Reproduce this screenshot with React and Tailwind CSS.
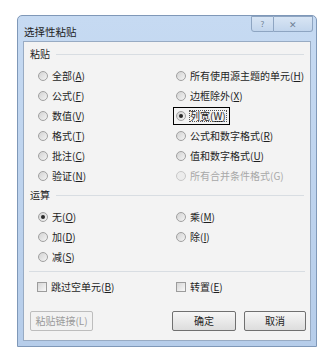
import React from 'react';

const font = { fontFamily: '"Noto Sans CJK SC", "Microsoft YaHei", sans-serif' };

const Radio = ({ checked, disabled }) => (
    <span className={`w-[10px] h-[10px] rounded-full border flex items-center justify-center shrink-0 ${disabled ? 'border-[#c8c8c8] bg-[#ececec]' : 'border-[#a0a0a0] bg-gradient-to-br from-[#d2d2d2] to-[#f4f4f4]'}`}>
        {checked && <span className="w-[4px] h-[4px] rounded-full bg-[#2a2a2a]"></span>}
    </span>
);

const Check = () => (
    <span className="w-[10px] h-[10px] border border-[#9c9c9c] bg-gradient-to-br from-[#d6d6d6] to-[#f8f8f8] shrink-0"></span>
);

const Label = ({ text, k, disabled }) => (
    <span className={disabled ? 'text-[#a8a8a8]' : 'text-[#1e1e1e]'}>
        {text}({disabled ? k : <u>{k}</u>})
    </span>
);

const Option = ({ text, k, checked, disabled, focus }) => (
    <div className="h-[20px] flex items-center">
        {focus ? (
            <div className="flex items-center gap-[4px] border border-black h-[18px] -ml-[3px] pl-[2px] pr-[3px]">
                <Radio checked={checked} />
                <span className="outline outline-1 outline-dotted outline-[#555]">
                    <Label text={text} k={k} />
                </span>
            </div>
        ) : (
            <div className="flex items-center gap-[4px]">
                <Radio checked={checked} disabled={disabled} />
                <Label text={text} k={k} disabled={disabled} />
            </div>
        )}
    </div>
);

const SectionHead = ({ title }) => (
    <div className="h-[18px] flex items-center pl-[6px] pr-[6px] gap-[6px]">
        <span className="text-[#1e1e1e]">{title}</span>
        <span className="flex-1 border-t border-[#d8dde2]"></span>
    </div>
);

const Button = ({ children, disabled, width }) => (
    <div className={`${width} h-[20px] flex items-center justify-center rounded-[2px] border ${disabled ? 'border-[#bdbdbd] bg-[#f2f2f2] text-[#9a9a9a]' : 'border-[#707070] bg-gradient-to-b from-[#f6f6f6] to-[#dddddd] text-[#1e1e1e]'}`}>
        {children}
    </div>
);

export default function App() {
    return (
        <div className="w-[331px] h-[358px] bg-white pt-[15px] pl-[17px]" style={font}>
            <div className="w-[300px] h-[332px] rounded-t-[5px] border border-[#7f98b8] bg-gradient-to-b from-[#c6daf2] to-[#b6cdea] flex flex-col px-[5px] pb-[5px] text-[10px] leading-none">
                {/* Title bar */}
                <div className="h-[25px] flex items-start justify-between">
                    <span className="mt-[11px] ml-[1px] text-[#1e1e1e] text-[10.5px]">选择性粘贴</span>
                    <div className="flex h-[16px] -mr-[2px]">
                        <div className="w-[23px] h-full border border-[#8ea5c2] rounded-bl-[3px] bg-gradient-to-b from-[#d8e5f4] to-[#c2d5ec] flex items-center justify-center text-[8px] text-[#6f7f94]">?</div>
                        <div className="w-[39px] h-full border border-l-0 border-[#8ea5c2] rounded-br-[3px] bg-gradient-to-b from-[#d8e5f4] to-[#c2d5ec] flex items-center justify-center text-[9px] text-[#6f7f94]">✕</div>
                    </div>
                </div>

                {/* Content */}
                <div className="flex-1 border border-[#98abc3] bg-[#f3f3f3] flex flex-col pt-[3px]">
                    <SectionHead title="粘贴" />
                    <div className="mt-[3px] grid grid-cols-[138px_1fr] pl-[14px]">
                        <div className="flex flex-col">
                            <Option text="全部" k="A" />
                            <Option text="公式" k="F" />
                            <Option text="数值" k="V" />
                            <Option text="格式" k="T" />
                            <Option text="批注" k="C" />
                            <Option text="验证" k="N" />
                        </div>
                        <div className="flex flex-col">
                            <Option text="所有使用源主题的单元" k="H" />
                            <Option text="边框除外" k="X" />
                            <Option text="列宽" k="W" checked focus />
                            <Option text="公式和数字格式" k="R" />
                            <Option text="值和数字格式" k="U" />
                            <Option text="所有合并条件格式" k="G" disabled />
                        </div>
                    </div>

                    <SectionHead title="运算" />
                    <div className="mt-[3px] grid grid-cols-[138px_1fr] pl-[14px]">
                        <div className="flex flex-col">
                            <Option text="无" k="O" checked />
                            <Option text="加" k="D" />
                            <Option text="减" k="S" />
                        </div>
                        <div className="flex flex-col">
                            <Option text="乘" k="M" />
                            <Option text="除" k="I" />
                        </div>
                    </div>

                    <div className="mt-[4px] mx-[5px] border-t border-[#d8dde2]"></div>

                    <div className="mt-[5px] h-[20px] grid grid-cols-[139px_1fr] pl-[13px] items-center">
                        <div className="flex items-center gap-[4px]">
                            <Check />
                            <Label text="跳过空单元" k="B" />
                        </div>
                        <div className="flex items-center gap-[4px]">
                            <Check />
                            <Label text="转置" k="E" />
                        </div>
                    </div>

                    <div className="mt-[14px] flex items-center pl-[6px] pr-[4px]">
                        <Button disabled width="w-[63px]">粘贴链接(L)</Button>
                        <div className="flex-1"></div>
                        <Button width="w-[64px]">确定</Button>
                        <div className="w-[8px]"></div>
                        <Button width="w-[62px]">取消</Button>
                    </div>
                </div>
            </div>
        </div>
    );
}
